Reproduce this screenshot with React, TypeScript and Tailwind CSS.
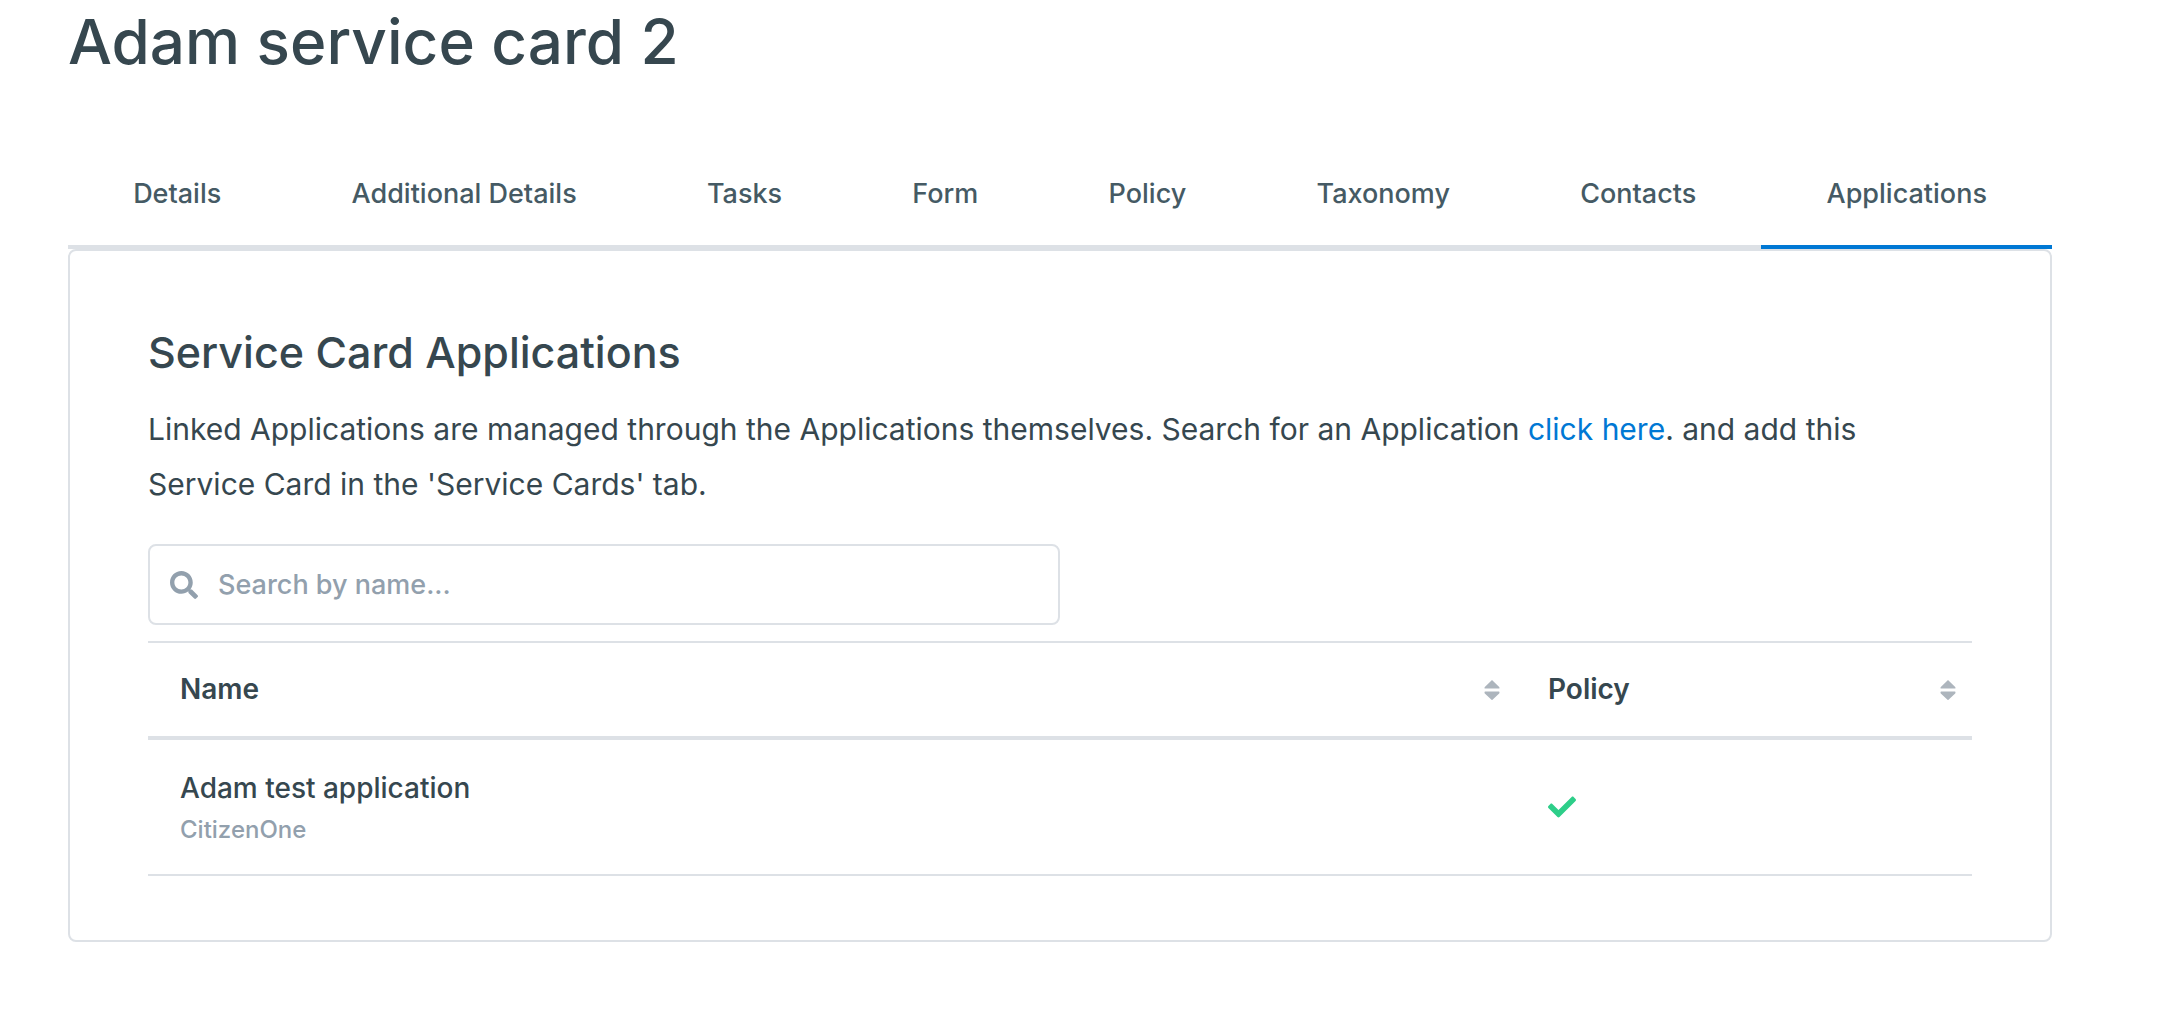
import { FaCheck, FaSearch } from "react-icons/fa";

const tabs = ["Details", "Additional Details", "Tasks", "Form", "Policy", "Taxonomy", "Contacts", "Applications"];

const applications = [{ name: "Adam test application", owner: "CitizenOne", policy: true }];

function SortIcon() {
  return (
    <svg viewBox="0 0 15 20" className="h-5 w-4 text-[#adb5bd]" fill="currentColor" aria-hidden="true">
      <path d="M7 .4q.5-.6 1 0L14.700 7q.3.4.3 1t-.6.600H.6Q0 8.600 0 8t.3-1zM7 19.800q.5.500 1 0L14.700 13.400q.3-.4.3-1t-.6-.800H.6q-.6.200-.6.800t.3 1z" />
    </svg>
  );
}

function SortableHeader({ label, className }: { label: string; className: string }) {
  return (
    <th scope="col" className={className}>
      <button type="button" className="flex w-full items-center justify-between py-6 pr-4 pl-8 font-semibold">
        {label}
        <SortIcon />
      </button>
    </th>
  );
}

export default function App() {
  return (
    <main className="min-h-screen bg-white pr-[126px] pl-[68px] font-['Inter',sans-serif] text-[28px] leading-[45px] font-medium text-[#36474f]">
      <h1 className="text-[62px] leading-[84px]">Adam service card 2</h1>

      <nav className="mt-[65px] flex border-b-4 border-[#dde1e6] text-[27px] text-[#455a64]">
        {tabs.map((tab) => (
          <a
            key={tab}
            href={"#" + tab.toLowerCase().replace(" ", "-")}
            aria-current={tab === "Applications" ? "page" : undefined}
            className={
              tab === "Applications"
                ? "-mb-1 flex-auto border-b-4 border-[#0078d4] pt-[22px] pb-[29px] text-center"
                : "flex-auto pt-[22px] pb-[29px] text-center"
            }
          >
            {tab}
          </a>
        ))}
      </nav>

      <section className="rounded-lg border-2 border-[#dde1e6] px-[78px] pt-[69px] pb-16">
        <h2 className="text-[43px] leading-16">Service Card Applications</h2>
        <p className="mt-[18px] pr-8 text-[30px] leading-[55px] font-normal">
          Linked Applications are managed through the Applications themselves. Search for an Application{" "}
          <a href="#applications-search" className="text-[#0078d4]">
            click here
          </a>
          . and add this Service Card in the 'Service Cards' tab.
        </p>

        <label className="mt-8 flex h-[81px] w-1/2 items-center gap-5 rounded-lg border-2 border-[#dde1e6] px-5 text-[27px] text-[#92a0ad]">
          <FaSearch className="size-7 shrink-0" aria-hidden="true" />
          <input
            type="search"
            aria-label="Search by name"
            placeholder="Search by name..."
            className="min-w-0 flex-1 text-[#36474f] outline-none placeholder:text-[#92a0ad]"
          />
        </label>

        <table className="mt-4 w-full table-fixed border-separate border-spacing-0 text-left">
          <thead>
            <tr>
              <SortableHeader label="Name" className="w-3/4 border-t-2 border-b-4 border-[#dde1e6]" />
              <SortableHeader label="Policy" className="w-1/4 border-t-2 border-b-4 border-[#dde1e6]" />
            </tr>
          </thead>
          <tbody>
            {applications.map((app) => (
              <tr key={app.name}>
                <td className="border-b-2 border-[#dde1e6] px-8 py-[26px]">
                  <div>{app.name}</div>
                  <div className="text-2xl leading-[37px] text-[#92a0ad]">{app.owner}</div>
                </td>
                <td className="border-b-2 border-[#dde1e6] px-8">
                  {app.policy && <FaCheck className="size-7 text-[#2dce89]" role="img" aria-label="Yes" />}
                </td>
              </tr>
            ))}
          </tbody>
        </table>
      </section>
    </main>
  );
}
